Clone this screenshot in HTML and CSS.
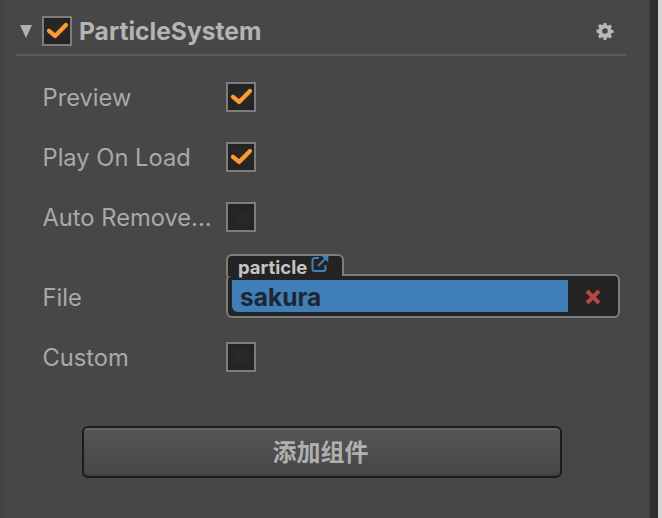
FILE: index.html
```html
<!DOCTYPE html>
<html lang="en">

<head>
	<meta charset="UTF-8">
	<title>ParticleSystem</title>
	<link rel="stylesheet" href="styles.css">
</head>

<body>
	<div class="panel">
		<div class="comp-header">
			<span class="fold"></span>
			<span class="check">
				<svg viewBox="0 0 22 22"><path d="M4.200 10.800l5.200 4.400 9.200-9.300" /></svg>
			</span>
			<span class="comp-name">ParticleSystem</span>
			<svg class="gear" viewBox="0 0 18 18">
				<path d="M7.600 1h2.800l.4 2.200 1.300.6 1.900-1.300 2 2-1.300 1.900.6 1.300 2.200.4v2.800l-2.200.4-.6 1.300 1.300 1.900-2 2-1.900-1.300-1.300.6-.4 2.200H7.600l-.4-2.200-1.300-.6-1.900 1.300-2-2 1.300-1.900-.6-1.300L.5 10.400V7.600l2.200-.4.6-1.300L2 4l2-2 1.900 1.300 1.300-.6z M9 6.200a2.800 2.800 0 1 0 0 5.600 2.800 2.800 0 0 0 0-5.600z" fill-rule="evenodd" />
			</svg>
		</div>

		<div class="props">
			<div class="prop">
				<span class="prop-name">Preview</span>
				<span class="check"><svg viewBox="0 0 22 22"><path d="M4.200 10.800l5.200 4.400 9.200-9.300" /></svg></span>
			</div>
			<div class="prop">
				<span class="prop-name">Play On Load</span>
				<span class="check"><svg viewBox="0 0 22 22"><path d="M4.200 10.800l5.200 4.400 9.200-9.300" /></svg></span>
			</div>
			<div class="prop">
				<span class="prop-name">Auto Remove...</span>
				<span class="check"></span>
			</div>
			<div class="prop file-prop">
				<span class="prop-name">File</span>
				<div class="asset">
					<div class="asset-tab">
						<span>particle</span>
						<svg class="open-icon" viewBox="0 0 18 18">
							<path d="M8 3H3.500A2 2 0 0 0 1.500 5v9a2 2 0 0 0 2 2h9a2 2 0 0 0 2-2v-4" />
							<path d="M7 11l8-8" />
							<path class="tip" d="M10.500 .7H17.300V7.500z" />
						</svg>
					</div>
					<div class="asset-box">
						<span class="asset-value">sakura</span>
						<svg class="clear" viewBox="0 0 16 16"><path d="M2 2l12 12M14 2L2 14" /></svg>
					</div>
				</div>
			</div>
			<div class="prop">
				<span class="prop-name">Custom</span>
				<span class="check"></span>
			</div>
		</div>

		<div class="add-row">
			<button class="add-btn">添加组件</button>
		</div>
	</div>
	<div class="side-bar"></div>
</body>

</html>
```

FILE: styles.css
```css
html, body {height: 100%;margin: 0;}
body {display: flex;background: #474747;font-family: "Inter", "Liberation Sans", "Noto Sans CJK SC", sans-serif;overflow: hidden;}

.panel {width: 650px;height: 518px;box-sizing: border-box;flex: none;padding: 9px 0 0 12px;border-left: 4px solid #444;border-right: 2px solid #424242;}
.side-bar {flex: 1;border-left: 8px solid #2e2e2e;background: #d4d4d4;}

.comp-header {display: flex;align-items: center;height: 44px;margin-right: 22px;padding: 0 0 1px 4px;border-bottom: 2px solid #5c5c5c;}
.fold {width: 0;height: 0;border-left: 6.5px solid transparent;border-right: 6.5px solid transparent;border-top: 13px solid #b0b0b0;margin-right: 9px;flex: none;}
.comp-header .check {margin-left: 1px;}
.comp-name {font-size: 24.600px;font-weight: 700;color: #b4b4b4;margin-left: 7px;flex: 1;}
.gear {width: 18px;height: 18px;fill: #b9b9b9;margin-right: 12px;}

.check {width: 30px;height: 30px;box-sizing: border-box;display: block;border: 2px solid #7d7d7d;background: radial-gradient(#2a2a2a, #212121);flex: none;}
.check svg {display: block;width: 26px;height: 26px;fill: none;stroke: #ff9a2e;stroke-width: 3.600;stroke-linecap: round;stroke-linejoin: round;}

.props {padding-top: 11px;}
.prop {display: flex;align-items: center;height: 60px;padding-left: 26px;}
.prop-name {width: 184px;box-sizing: border-box;padding-left: .5px;font-size: 23.700px;color: #a9a9a9;flex: none;white-space: nowrap;}

.file-prop {height: 80px;align-items: flex-end;}
.file-prop .prop-name {line-height: 58px;}
.asset {width: 394px;margin-bottom: 9px;}
.asset-tab {display: flex;width: fit-content;align-items: center;gap: 4px;height: 22px;box-sizing: border-box;padding: 2px 13px 0 10px;background: #232323;border: 2px solid #7d7d7d;border-bottom: 0;border-radius: 6px 6px 0 0;font-size: 18.500px;font-weight: 700;color: #c4c4c4;position: relative;z-index: 1;}
.open-icon {width: 18px;height: 18px;margin-top: -6px;fill: none;stroke: #3f80b8;stroke-width: 2;}
.open-icon .tip {fill: #3f80b8;stroke: none;}
.asset-box {display: flex;align-items: center;height: 44px;box-sizing: border-box;margin-top: -2px;padding: 4px 0 4px 4px;background: #232323;border: 2px solid #7d7d7d;border-radius: 6px;}
.asset-value {flex: none;width: 336px;height: 32px;line-height: 35px;box-sizing: border-box;padding-left: 8px;background: #3f7fb8;border-radius: 0 0 0 6px;font-size: 24.500px;font-weight: 700;color: #1e2730;}
.clear {width: 16px;height: 16px;margin: 2px 0 0 17px;fill: none;stroke: #b84545;stroke-width: 4;}

.add-row {padding: 39px 86px 0 66px;}
.add-btn {display: block;width: 100%;height: 52px;padding: 0 3px 4px 0;background: linear-gradient(#555, #474747);border: 2px solid #1c1c1c;border-radius: 6px;box-shadow: inset 0 2px 0 #626262, inset 0 -2px 0 #3e3e3e;font-family: inherit;font-size: 24px;font-weight: 700;color: #b0b0b0;}
```
